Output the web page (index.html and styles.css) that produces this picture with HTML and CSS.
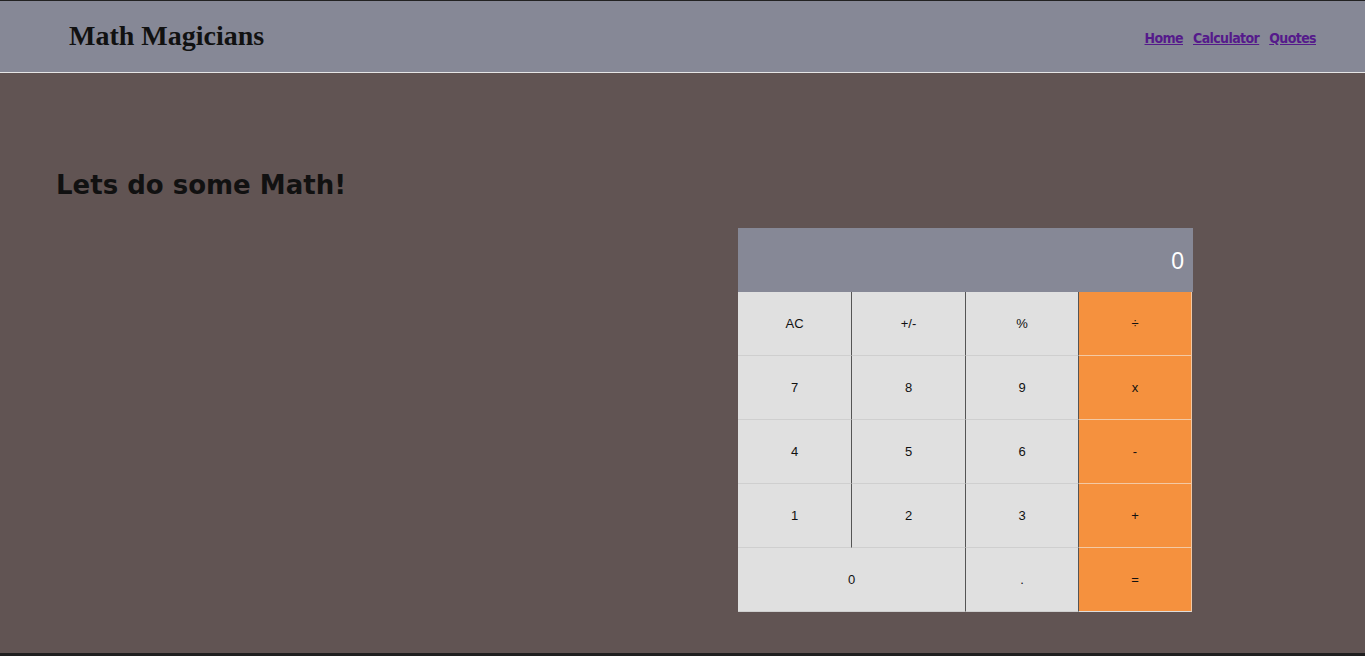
FILE: index.html
```html
<!DOCTYPE html>
<html lang="en">
<head>
<meta charset="utf-8">
<title>Math Magicians</title>
<link rel="stylesheet" href="styles.css">
</head>
<body>
<div class="topline"></div>
<header class="header">
  <h1 class="logo">Math Magicians</h1>
  <nav class="nav">
    <a href="#" class="nav-link">Home</a>
    <a href="#" class="nav-link">Calculator</a>
    <a href="#" class="nav-link">Quotes</a>
  </nav>
</header>
<main class="main">
  <h2 class="intro">Lets do some Math!</h2>
  <div class="calculator">
    <div class="display">0</div>
    <div class="keys">
      <button class="key">AC</button>
      <button class="key">+/-</button>
      <button class="key">%</button>
      <button class="key op">÷</button>
      <button class="key">7</button>
      <button class="key">8</button>
      <button class="key">9</button>
      <button class="key op">x</button>
      <button class="key">4</button>
      <button class="key">5</button>
      <button class="key">6</button>
      <button class="key op">-</button>
      <button class="key">1</button>
      <button class="key">2</button>
      <button class="key">3</button>
      <button class="key op">+</button>
      <button class="key wide">0</button>
      <button class="key">.</button>
      <button class="key op last">=</button>
    </div>
  </div>
</main>
<div class="bottomline"></div>
</body>
</html>
```
FILE: styles.css
```css
* { box-sizing: border-box; }
html, body { margin: 0; padding: 0; }
body {
  height: 100vh;
  display: flex;
  flex-direction: column;
  background: #615453;
  font-family: "Liberation Sans", Arial, sans-serif;
  overflow: hidden;
}
.topline { height: 1px; background: #222; flex: none; }
.header {
  flex: none;
  height: 72px;
  background: #868896;
  border-bottom: 1px solid #e6e6e6;
  display: flex;
  align-items: center;
  justify-content: space-between;
  padding: 0 49px 0 69px;
}
.logo {
  margin: 0;
  font-family: "Liberation Serif", "DejaVu Serif", serif;
  font-weight: bold;
  font-size: 28px;
  color: #111;
  position: relative;
  top: -1px;
}
.nav {
  display: flex;
  gap: 10px;
  margin-top: 3px;
}
.nav-link {
  font-family: "DejaVu Sans Condensed", "DejaVu Sans", sans-serif;
  font-stretch: condensed;
  font-weight: bold;
  font-size: 14px;
  letter-spacing: -0.6px;
  color: #551a8b;
  text-decoration: underline;
}
.main {
  flex: 1;
  display: flex;
  align-items: flex-start;
  padding: 0 0 0 56px;
}
.intro {
  margin: 97px 0 0 0;
  font-family: "DejaVu Sans", sans-serif;
  font-weight: bold;
  font-size: 26px;
  color: #111;
  width: 682px;
  flex: none;
}
.calculator {
  margin-top: 155px;
  width: 455px;
  flex: none;
}
.display {
  height: 64px;
  background: #868896;
  color: #fff;
  font-size: 23px;
  text-align: right;
  padding: 20px 9px 0 0;
}
.keys {
  width: 454px;
  display: grid;
  grid-template-columns: 114px 114px 113px 113px;
  grid-auto-rows: 64px;
}
.key {
  margin: 0;
  border: 0;
  border-right: 1px solid #555;
  border-bottom: 1px solid #cfcfcf;
  background: #e0e0e0;
  color: #111;
  font-family: "Liberation Sans", Arial, sans-serif;
  font-size: 13px;
  padding: 0;
}
.key.wide { grid-column: span 2; }
.key.op {
  background: #f5913e;
  border: 1px solid #f3c9a4;
  border-top: 0;
  border-left: 0;
}
.key.last { border-bottom-color: #ddd; }
.bottomline { height: 3px; background: #1f1f1f; flex: none; }
```
